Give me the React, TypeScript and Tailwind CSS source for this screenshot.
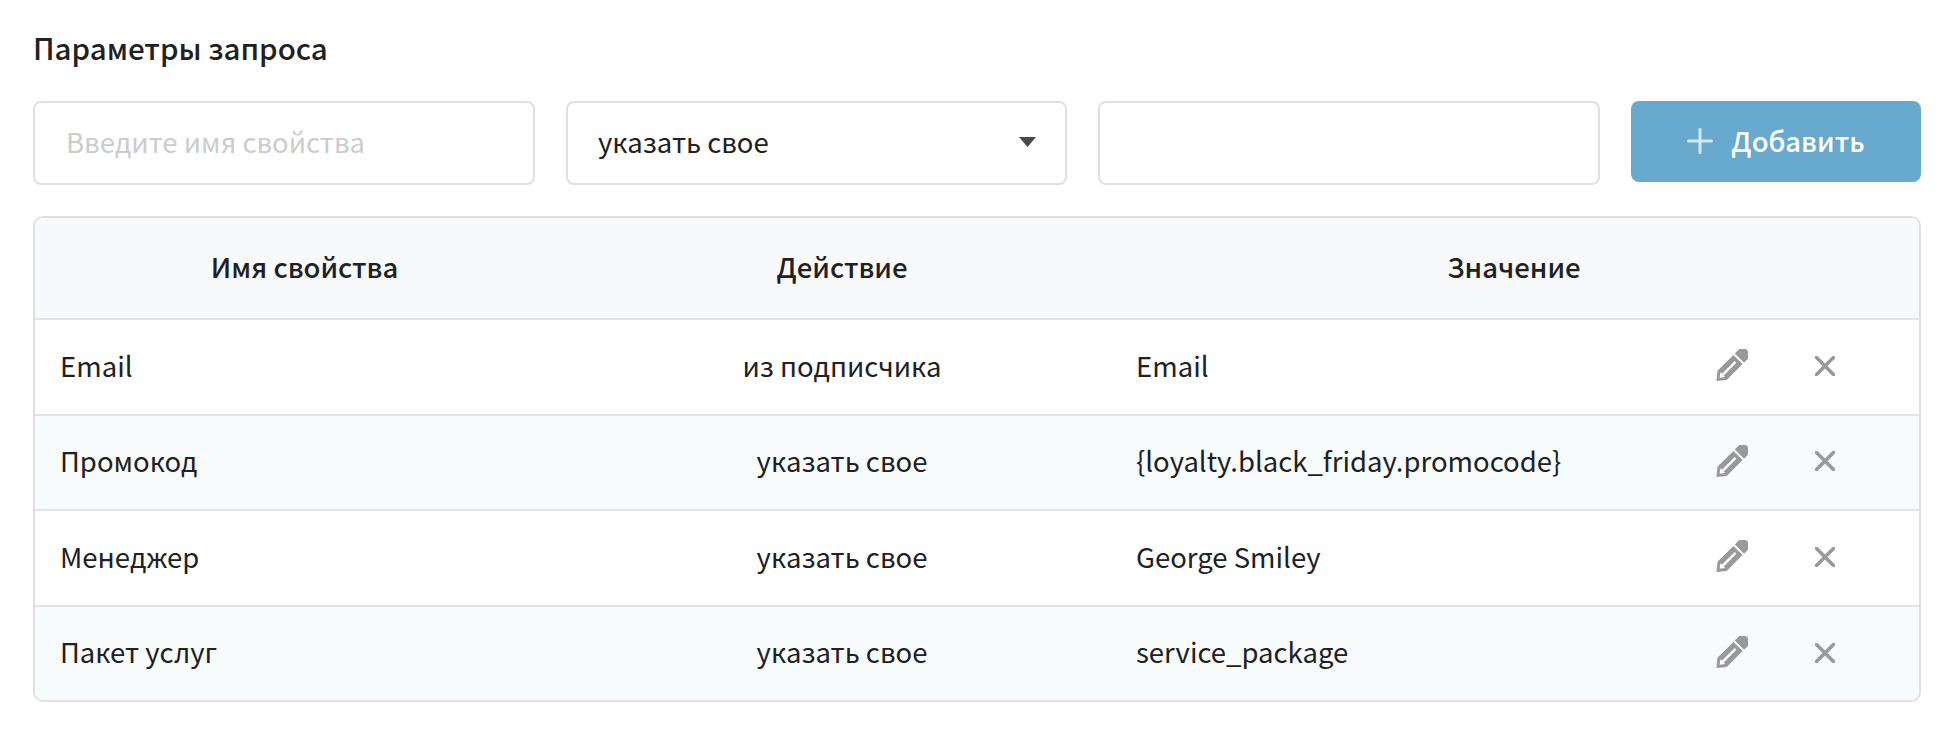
const rows = [
  { name: "Email", action: "из подписчика", value: "Email", alt: false },
  { name: "Промокод", action: "указать свое", value: "{loyalty.black_friday.promocode}", alt: true },
  { name: "Менеджер", action: "указать свое", value: "George Smiley", alt: false },
  { name: "Пакет услуг", action: "указать свое", value: "service_package", alt: true },
];

function Cross() {
  return (
    <svg width="20" height="20" viewBox="0 0 20 20" className="text-[#999999]">
      <path d="M1.5 1.5 L18.5 18.5 M18.5 1.5 L1.5 18.5" stroke="currentColor" strokeWidth="3.6" strokeLinecap="round" />
    </svg>
  );
}

function Pencil() {
  return (
    <svg width="32" height="33" viewBox="0 0 32 33" className="text-[#999999]">
      <g transform="translate(16 16.5) rotate(-45)">
        <path d="M-22 0 L-14 -6.5 H8.5 V6.5 H-14 Z" fill="currentColor" />
        <path d="M10.5 -6.5 H17 Q21.5 -6.5 21.5 -2.5 V2.5 Q21.5 6.5 17 6.5 H10.5 Z" fill="currentColor" />
        <path d="M-17.5 0 L-13 -3.4 V3.4 Z" fill="white" />
        <path d="M-13 0 H5" stroke="white" strokeWidth="2.4" />
      </g>
    </svg>
  );
}

export default function App() {
  return (
    <div className="w-[1953px] h-[741px] bg-white pl-[33px] pr-[32px] pt-[27px] text-[#212121] text-[27.5px] font-['Noto_Sans_CJK_SC',sans-serif]">
      <h2 className="h-[40px] leading-[40px] text-[29.5px] font-medium">Параметры запроса</h2>
      <div className="mt-[34px] flex items-start gap-[31px]">
        <input
          placeholder="Введите имя свойства"
          className="w-[502px] h-[84px] border-2 border-[#e0e0e0] rounded-[8px] px-[31px] pb-[4px] outline-none placeholder:text-[#cccccc]"
        />
        <div className="w-[501px] h-[84px] border-2 border-[#e0e0e0] rounded-[8px] pl-[30px] pr-[29px] pb-[2px] flex items-center justify-between">
          <span>указать свое</span>
          <svg width="17" height="10" viewBox="0 0 17 10" className="text-[#4a4a4a]">
            <path d="M0 0 H17 L8.5 10 Z" fill="currentColor" />
          </svg>
        </div>
        <input className="w-[502px] h-[84px] border-2 border-[#e0e0e0] rounded-[8px] px-[31px] outline-none" />
        <button className="w-[290px] h-[81px] pb-[2px] rounded-[8px] bg-[#68a9ce] text-white font-medium flex items-center justify-center gap-[18px]">
          <svg width="26" height="26" viewBox="0 0 26 26" className="text-[#d6e8f2]">
            <path d="M13 1.5 V24.5 M1.5 13 H24.5" stroke="currentColor" strokeWidth="3" strokeLinecap="round" />
          </svg>
          <span>Добавить</span>
        </button>
      </div>
      <div className="mt-[31px] border-2 border-[#e0e0e0] rounded-[10px] overflow-hidden">
        <div className="h-[102px] pb-[2px] flex items-center bg-[#f8f9fb] border-b-2 border-[#e2e4e6] font-medium text-center">
          <div className="w-[539px]">Имя свойства</div>
          <div className="w-[536px]">Действие</div>
          <div className="w-[808px]">Значение</div>
        </div>
        {rows.map((r, i) => (
          <div
            key={r.name}
            className={
              (r.alt ? "bg-[#f7fbfc] " : "bg-white ") +
              (i < rows.length - 1 ? "h-[95.6px] border-b-2 border-[#e2e4e6] " : "h-[93.5px] ") +
              "pb-[3px] flex items-center"
            }
          >
            <div className="w-[539px] pl-[25px]">{r.name}</div>
            <div className="w-[536px] text-center">{r.action}</div>
            <div className="w-[597px] pl-[26px]">{r.value}</div>
            <div className="w-[50px] flex justify-center pt-[1px]">
              <Pencil />
            </div>
            <div className="ml-[58px] pt-[1px]">
              <Cross />
            </div>
          </div>
        ))}
      </div>
    </div>
  );
}
